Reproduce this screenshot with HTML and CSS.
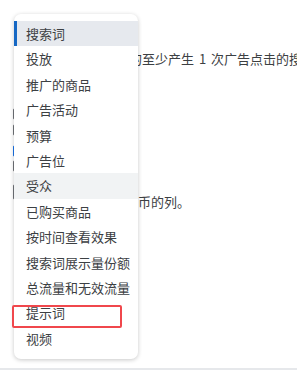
FILE: index.html
```html
<!DOCTYPE html>
<html lang="zh">
<head>
    <meta charset="UTF-8">
    <meta name="viewport" content="width=device-width, initial-scale=1.0">
    <title>报告列</title>
    <link rel="stylesheet" href="styles.css">
</head>
<body>
    <div class="page">
        <div class="desc line1">的至少产生 1 次广告点击的搜索词</div>
        <div class="checks">
            <span class="cb cb1"></span>
            <span class="cb cb2"></span>
            <span class="cb cb3 checked"></span>
            <span class="cb cb4"></span>
            <span class="cb cb5"></span>
        </div>
        <div class="desc line2">货币的列。</div>
    </div>

    <div class="menu">
        <div class="item active">搜索词</div>
        <div class="item">投放</div>
        <div class="item">推广的商品</div>
        <div class="item">广告活动</div>
        <div class="item">预算</div>
        <div class="item">广告位</div>
        <div class="item hover">受众</div>
        <div class="item">已购买商品</div>
        <div class="item">按时间查看效果</div>
        <div class="item">搜索词展示量份额</div>
        <div class="item">总流量和无效流量</div>
        <div class="item">提示词</div>
        <div class="item">视频</div>
    </div>

    <div class="mark"></div>
</body>
</html>
```

FILE: styles.css
```css
body {
    margin: 0;
    font-family: "Noto Sans CJK SC", "Noto Sans", sans-serif;
    font-size: 13px;
    color: #3c4043;
    background-color: white;
}
.page {
    height: 368px;
    border-bottom: 2px solid #e6e8eb;
    overflow: hidden;
}
.desc {
    white-space: nowrap;
    line-height: 18px;
}
.line1 {
    padding: 50px 0 0 129px;
    word-spacing: 2px;
}
.line2 {
    padding: 0 0 0 125px;
}
.checks {
    position: relative;
    height: 125px;
}
.cb {
    position: absolute;
    left: 13px;
    width: 12px;
    height: 10px;
    border: 1px solid #6f7378;
    border-radius: 2px;
}
.cb1 { top: 40px; }
.cb2 { top: 56px; }
.cb3 { top: 77px; }
.cb4 { top: 92px; }
.cb5 { top: 116px; height: 14px; }
.cb.checked {
    background-color: #1a73e8;
    border-color: #1a73e8;
}
.menu {
    position: absolute;
    top: 14px;
    left: 14px;
    width: 124px;
    padding: 7px 0 8px;
    background-color: white;
    border-radius: 7px;
    box-shadow: 0 1px 4px rgba(0,0,0,0.22);
}
.item {
    height: 25.4px;
    line-height: 25.4px;
    padding-left: 12px;
    white-space: nowrap;
}
.item.active {
    background-color: #e6e9ee;
    box-shadow: inset 3px 0 0 #1668c4;
}
.item.hover {
    background-color: #f1f3f4;
}
.mark {
    position: absolute;
    top: 305px;
    left: 12px;
    width: 106px;
    height: 19px;
    border: 2px solid #f0474c;
    border-radius: 2px;
}
```
